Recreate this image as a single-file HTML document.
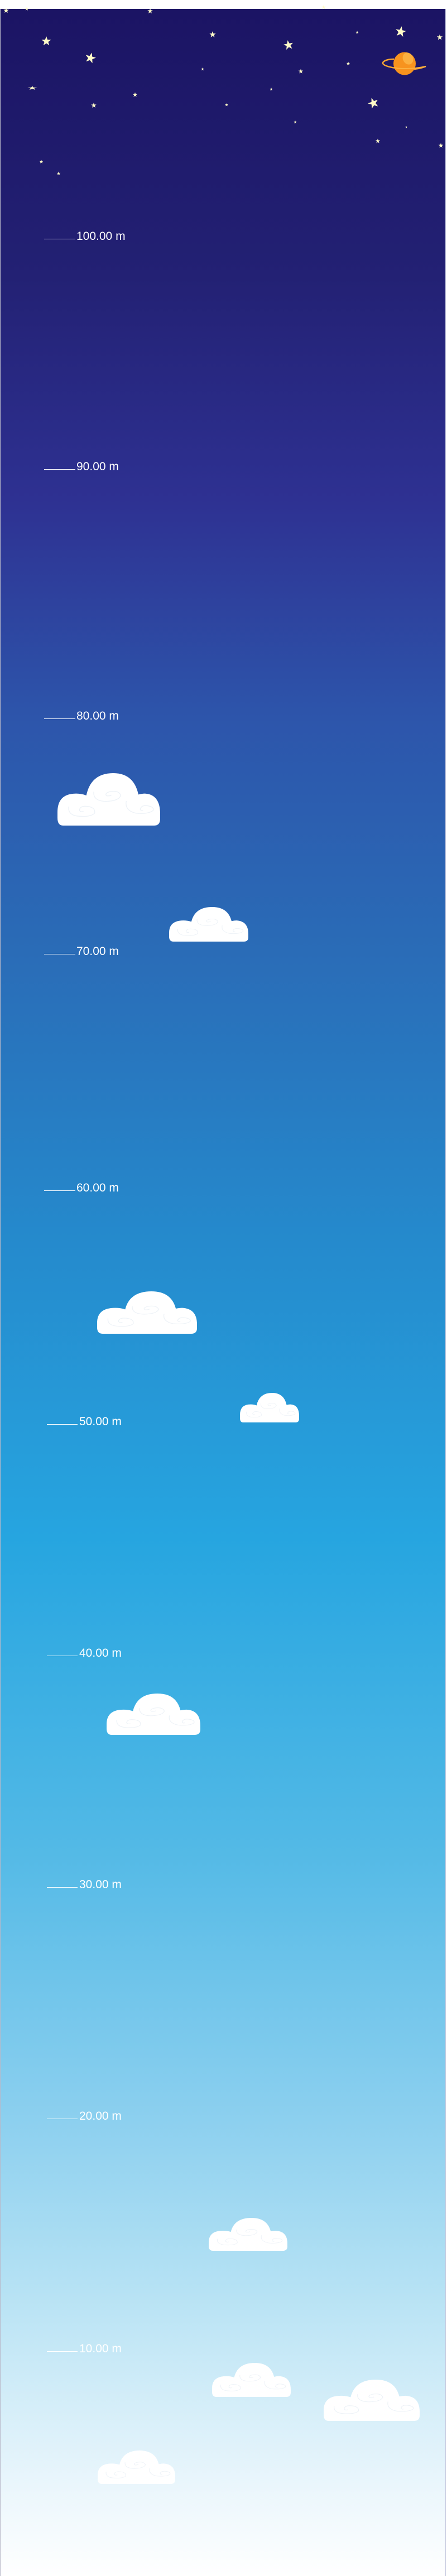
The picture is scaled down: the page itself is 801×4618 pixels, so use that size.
<!DOCTYPE html>
<html><head><meta charset="utf-8"><style>
html,body{margin:0;padding:0;background:#fff}
body{width:801px;height:4618px;position:relative;overflow:hidden;font-family:"Liberation Sans",sans-serif}
#sky{position:absolute;left:0;top:16px;width:799px;height:4602px;border-left:1px solid #b9b9c9;border-right:1px solid #c8cbe0;box-sizing:border-box;
background:linear-gradient(to bottom,#1b1464 0px,#232174 480px,#2e3192 880px,#2d55ab 1270px,#2a6cb7 1690px,#2589cc 2190px,#26a5e0 2740px,#52b9e6 3290px,#8dd0ef 3790px,#b6e2f4 4090px,#eaf6fc 4440px,#ffffff 4602px)}
.l{position:absolute;height:1px;background:#fff}
.t{position:absolute;color:#fff;font-size:21px;line-height:21px;white-space:nowrap}
svg{position:absolute}
</style></head><body>
<div id="sky"></div>

<svg width="801" height="340" style="left:0;top:0" viewBox="0 0 801 340">
<defs><polygon id="s" points="0,-10 2.4,-3.2 9.5,-3.1 3.8,1.2 5.9,8.1 0,4 -5.9,8.1 -3.8,1.2 -9.5,-3.1 -2.4,-3.2" fill="#fffbc8"/></defs>
<use href="#s" transform="translate(11,19) scale(.5)"/>
<use href="#s" transform="translate(48,16) scale(.35)"/>
<use href="#s" transform="translate(269,20) scale(.5)"/>
<use href="#s" transform="translate(580,13) scale(.4)"/>
<use href="#s" transform="translate(83,74) scale(.9)"/>
<use href="#s" transform="translate(162,104) scale(1) rotate(15)"/>
<use href="#s" transform="translate(381,62) scale(.6)"/>
<use href="#s" transform="translate(517,81) scale(.9) rotate(-10)"/>
<use href="#s" transform="translate(640,58) scale(.3)"/>
<use href="#s" transform="translate(718,57) scale(1) rotate(10)"/>
<use href="#s" transform="translate(788,67) scale(.55)"/>
<use href="#s" transform="translate(624,114) scale(.35)"/>
<use href="#s" transform="translate(539,128) scale(.45)"/>
<use href="#s" transform="translate(363,124) scale(.3)"/>
<use href="#s" transform="translate(58,158) scale(.9,.35)"/>
<use href="#s" transform="translate(242,170) scale(.45)"/>
<use href="#s" transform="translate(168,189) scale(.5)"/>
<use href="#s" transform="translate(486,160) scale(.3)"/>
<use href="#s" transform="translate(406,188) scale(.3)"/>
<use href="#s" transform="translate(669,185) scale(1) rotate(-20)"/>
<use href="#s" transform="translate(529,219) scale(.3)"/>
<use href="#s" transform="translate(728,228) scale(.22)"/>
<use href="#s" transform="translate(677,253) scale(.45)"/>
<use href="#s" transform="translate(790,261) scale(.45)"/>
<use href="#s" transform="translate(74,290) scale(.35)"/>
<use href="#s" transform="translate(105,311) scale(.35)"/>
<path d="M706,106 C690,106 682,112 688,116 C694,120 712,124 738,124 C750,124 758,121 763,119" stroke="#f7a634" stroke-width="2.5" fill="none"/>
<ellipse cx="725" cy="114" rx="20" ry="20.5" fill="#f7931e"/>
<ellipse cx="731" cy="105" rx="9" ry="11" fill="#fbb040" transform="rotate(-25 731 105)"/>
<path d="M706,121 C715,124 740,124 763,119" stroke="#fbb040" stroke-width="2" fill="none"/>
</svg>

<div class="l" style="left:79px;top:428px;width:56px"></div><div class="t" style="left:137px;top:413px">100.00 m</div>
<div class="l" style="left:79px;top:841px;width:56px"></div><div class="t" style="left:137px;top:826px">90.00 m</div>
<div class="l" style="left:79px;top:1288px;width:56px"></div><div class="t" style="left:137px;top:1273px">80.00 m</div>
<div class="l" style="left:79px;top:1710px;width:56px"></div><div class="t" style="left:137px;top:1695px">70.00 m</div>
<div class="l" style="left:79px;top:2134px;width:56px"></div><div class="t" style="left:137px;top:2119px">60.00 m</div>
<div class="l" style="left:84px;top:2553px;width:55px"></div><div class="t" style="left:142px;top:2538px">50.00 m</div>
<div class="l" style="left:84px;top:2968px;width:55px"></div><div class="t" style="left:142px;top:2953px">40.00 m</div>
<div class="l" style="left:84px;top:3383px;width:55px"></div><div class="t" style="left:142px;top:3368px">30.00 m</div>
<div class="l" style="left:84px;top:3798px;width:55px"></div><div class="t" style="left:142px;top:3783px">20.00 m</div>
<div class="l" style="left:84px;top:4215px;width:55px"></div><div class="t" style="left:142px;top:4200px">10.00 m</div>

<svg width="0" height="0" style="left:0;top:0"><defs>
<g id="c">
<path d="M30,282 Q0,282 0,240 L0,210 Q0,110 100,110 Q130,110 155,120 Q180,0 300,0 Q410,0 435,115 Q455,110 470,110 Q552,115 552,220 L552,245 Q552,282 520,282 Z" fill="#fff"/>
<g stroke="#edf2f7" stroke-width="4" fill="none">
<path d="M60,180 Q55,230 120,232 Q180,236 200,215 Q205,180 150,178 Q120,178 118,200 Q125,212 140,205"/>
<path d="M195,100 Q190,150 260,152 Q330,150 340,120 Q330,90 280,100 Q250,110 265,122 Q280,124 290,118"/>
<path d="M370,150 Q360,200 420,215 Q490,222 515,200 Q520,180 480,175 Q450,172 445,195 Q450,205 460,200"/>
</g></g></defs></svg>

<svg style="left:103px;top:1386px" width="184" height="94" viewBox="0 0 552 282" preserveAspectRatio="none"><use href="#c"/></svg>
<svg style="left:303px;top:1626px" width="142" height="62" viewBox="0 0 552 282" preserveAspectRatio="none"><use href="#c"/></svg>
<svg style="left:174px;top:2315px" width="179" height="76" viewBox="0 0 552 282" preserveAspectRatio="none"><use href="#c"/></svg>
<svg style="left:430px;top:2497px" width="106" height="53" viewBox="0 0 552 282" preserveAspectRatio="none"><use href="#c"/></svg>
<svg style="left:191px;top:3036px" width="168" height="74" viewBox="0 0 552 282" preserveAspectRatio="none"><use href="#c"/></svg>
<svg style="left:374px;top:3976px" width="141" height="59" viewBox="0 0 552 282" preserveAspectRatio="none"><use href="#c"/></svg>
<svg style="left:380px;top:4236px" width="141" height="61" viewBox="0 0 552 282" preserveAspectRatio="none"><use href="#c"/></svg>
<svg style="left:580px;top:4266px" width="172" height="74" viewBox="0 0 552 282" preserveAspectRatio="none"><use href="#c"/></svg>
<svg style="left:175px;top:4393px" width="139" height="60" viewBox="0 0 552 282" preserveAspectRatio="none"><use href="#c"/></svg>
</body></html>
